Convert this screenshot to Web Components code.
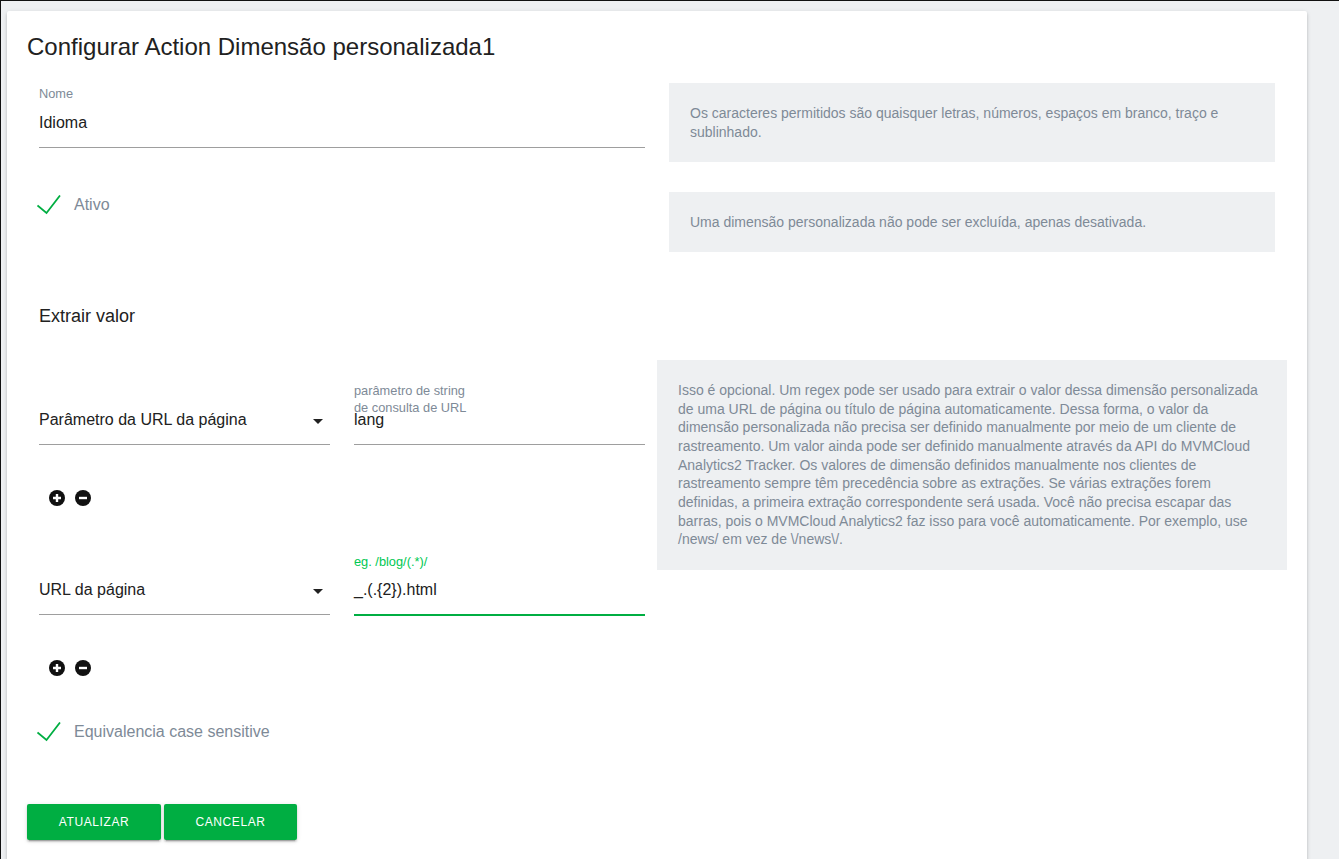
<!DOCTYPE html>
<html>
<head>
<meta charset="utf-8">
<title>Configurar Action</title>
<style>
  html, body { margin: 0; height: 100%; }
  body {
    height: 859px;
    overflow: hidden;
    box-sizing: border-box;
    background: #eef0f2;
    border-top: 1px solid #111;
    border-left: 1px solid #111;
    padding: 10px 32px 0 6px;
    font-family: "Liberation Sans", Arial, sans-serif;
  }
</style>
</head>
<body>
<action-card>
  <form-row>
    <text-field label="Nome" value="Idioma"></text-field>
    <help-note slot="help" style="height:79px">Os caracteres permitidos são quaisquer letras, números, espaços em branco, traço e sublinhado.</help-note>
  </form-row>
  <form-row style="margin-top:30px">
    <check-field label="Ativo" style="margin-top:2px"></check-field>
    <help-note slot="help" style="height:60px">Uma dimensão personalizada não pode ser excluída, apenas desativada.</help-note>
  </form-row>
  <extract-section>
    <extract-row type="Parâmetro da URL da página" label="parâmetro de string&#10;de consulta de URL" value="lang"></extract-row>
    <extract-row type="URL da página" label="eg. /blog/(.*)/" value="_.(.{2}).html" focused></extract-row>
    <help-note slot="help">Isso é opcional. Um regex pode ser usado para extrair o valor dessa dimensão personalizada de uma URL de página ou título de página automaticamente. Dessa forma, o valor da dimensão personalizada não precisa ser definido manualmente por meio de um cliente de rastreamento. Um valor ainda pode ser definido manualmente através da API do MVMCloud Analytics2 Tracker. Os valores de dimensão definidos manualmente nos clientes de rastreamento sempre têm precedência sobre as extrações. Se várias extrações forem definidas, a primeira extração correspondente será usada. Você não precisa escapar das barras, pois o MVMCloud Analytics2 faz isso para você automaticamente. Por exemplo, use /news/ em vez de \/news\/.</help-note>
  </extract-section>
  <check-field label="Equivalencia case sensitive" style="margin-top:21px;margin-left:12px"></check-field>
  <div slot="actions" style="display:flex;gap:3px">
    <action-button>Atualizar</action-button>
    <action-button style="width:133px">Cancelar</action-button>
  </div>
</action-card>

<script>
class ActionCard extends HTMLElement {
  constructor() {
    super();
    this.attachShadow({ mode: 'open' });
    this.shadowRoot.innerHTML = `
      <style>
        :host {
          display: block;
          height: 860px;
          box-sizing: border-box;
          background: #fff;
          border-radius: 2px;
          box-shadow: 0 2px 3px rgba(0,0,0,.16), 0 1px 5px rgba(0,0,0,.1);
          padding: 20px 20px 0 20px;
          color: #212121;
        }
        h2 {
          margin: 0 0 20px;
          font-size: 24px;
          font-weight: 400;
          line-height: 32px;
          color: #212121;
        }
        .actions { margin-top: 61px; }
      </style>
      <h2>Configurar Action Dimensão personalizada1</h2>
      <slot></slot>
      <div class="actions"><slot name="actions"></slot></div>
    `;
  }
}

class FormRow extends HTMLElement {
  constructor() {
    super();
    this.attachShadow({ mode: 'open' });
    this.shadowRoot.innerHTML = `
      <style>
        :host {
          display: grid;
          grid-template-columns: 606px 606px;
          column-gap: 24px;
          padding-left: 12px;
          align-items: start;
        }
      </style>
      <div><slot></slot></div>
      <div><slot name="help"></slot></div>
    `;
  }
}

class TextField extends HTMLElement {
  constructor() {
    super();
    this.attachShadow({ mode: 'open' });
    const label = this.getAttribute('label') || '';
    const value = this.getAttribute('value') || '';
    this.shadowRoot.innerHTML = `
      <style>
        :host { display: block; height: 65px; box-sizing: border-box; border-bottom: 1px solid #9e9e9e; position: relative; }
        :host([focused]) { border-bottom: 2px solid #00ae42; margin-bottom: -1px; }
        .label { position: absolute; left: 0; top: calc(100% - 62px); font-size: 12.8px; line-height: 17px; color: #7e8a97; white-space: pre-line; }
        :host([focused]) .label { color: #00c853; top: calc(100% - 61px); }
        .value { position: absolute; left: 0; bottom: 13px; font-size: 16px; line-height: 22px; color: #212121; }
      </style>
      <div class="label">${label}</div>
      <div class="value">${value}</div>
    `;
  }
}

class CheckField extends HTMLElement {
  constructor() {
    super();
    this.attachShadow({ mode: 'open' });
    this.shadowRoot.innerHTML = `
      <style>
        :host { display: flex; align-items: center; height: 22px; font-size: 16px; color: #7e8a97; }
        svg { width: 24px; height: 20px; margin-left: -2px; margin-right: 13px; }
      </style>
      <svg viewBox="0 0 24 20"><path d="M.5 10.5 L9.5 18 L23 .5" fill="none" stroke="#00ae42" stroke-width="1.8"/></svg>
      <span>${this.getAttribute('label')}</span>
    `;
  }
}

class HelpNote extends HTMLElement {
  constructor() {
    super();
    this.attachShadow({ mode: 'open' });
    this.shadowRoot.innerHTML = `
      <style>
        :host {
          display: block;
          box-sizing: border-box;
          background: #eef0f2;
          color: #7e8a97;
          font-size: 14px;
          line-height: 18.67px;
          padding: 21px;
        }
      </style>
      <slot></slot>
    `;
  }
}

class ExtractSection extends HTMLElement {
  constructor() {
    super();
    this.attachShadow({ mode: 'open' });
    this.shadowRoot.innerHTML = `
      <style>
        :host { display: block; padding-left: 12px; }
        h3 { margin: 53px 0 0; font-size: 18px; font-weight: 400; line-height: 22px; color: #212121; }
        .cols { display: grid; grid-template-columns: 606px 630px; column-gap: 12px; margin-top: 33px; align-items: start; }
        ::slotted(help-note) { height: 210px; }
      </style>
      <h3>Extrair valor</h3>
      <div class="cols">
        <div><slot></slot></div>
        <div><slot name="help"></slot></div>
      </div>
    `;
  }
}

class ExtractRow extends HTMLElement {
  constructor() {
    super();
    this.attachShadow({ mode: 'open' });
    const focused = this.hasAttribute('focused') ? 'focused' : '';
    this.shadowRoot.innerHTML = `
      <style>
        :host { display: block; height: 170px; }
        .fields { display: grid; grid-template-columns: 291px 291px; column-gap: 24px; align-items: start; }
        .select { height: 85px; box-sizing: border-box; border-bottom: 1px solid #9e9e9e; display: flex; align-items: flex-end; justify-content: space-between; padding-bottom: 13px; font-size: 16px; line-height: 22px; color: #212121; }
        .arrow { width: 0; height: 0; border: 5px solid transparent; border-top-color: #212121; border-bottom: 0; margin: 0 7px 7px 0; }
        text-field { height: 85px; }
        text-field[focused] { height: 86px; }
        .tools { display: flex; gap: 8px; margin: 44px 0 0 9px; }
        svg { width: 18px; height: 18px; display: block; }
      </style>
      <div class="fields">
        <div class="select"><span>${this.getAttribute('type')}</span><i class="arrow"></i></div>
        <text-field label="${this.getAttribute('label')}" value="${this.getAttribute('value')}" ${focused}></text-field>
      </div>
      <div class="tools">
        <svg viewBox="0 0 18 18"><circle cx="9" cy="9" r="8" fill="#111"/><path d="M9 5v8M5 9h8" stroke="#fff" stroke-width="2.4"/></svg>
        <svg viewBox="0 0 18 18"><circle cx="9" cy="9" r="8" fill="#111"/><path d="M5 9h8" stroke="#fff" stroke-width="2.4"/></svg>
      </div>
    `;
  }
}

class ActionButton extends HTMLElement {
  constructor() {
    super();
    this.attachShadow({ mode: 'open' });
    this.shadowRoot.innerHTML = `
      <style>
        :host {
          display: inline-flex;
          align-items: center;
          justify-content: center;
          width: 134px;
          height: 36px;
          background: #00ae42;
          color: #fff;
          border-radius: 2px;
          font-size: 12px;
          letter-spacing: .6px;
          text-transform: uppercase;
          box-shadow: 0 2px 2px rgba(0,0,0,.14), 0 3px 1px -2px rgba(0,0,0,.2), 0 1px 5px rgba(0,0,0,.12);
        }
      </style>
      <slot></slot>
    `;
  }
}

customElements.define('action-card', ActionCard);
customElements.define('form-row', FormRow);
customElements.define('text-field', TextField);
customElements.define('check-field', CheckField);
customElements.define('help-note', HelpNote);
customElements.define('extract-section', ExtractSection);
customElements.define('extract-row', ExtractRow);
customElements.define('action-button', ActionButton);
</script>
</body>
</html>
